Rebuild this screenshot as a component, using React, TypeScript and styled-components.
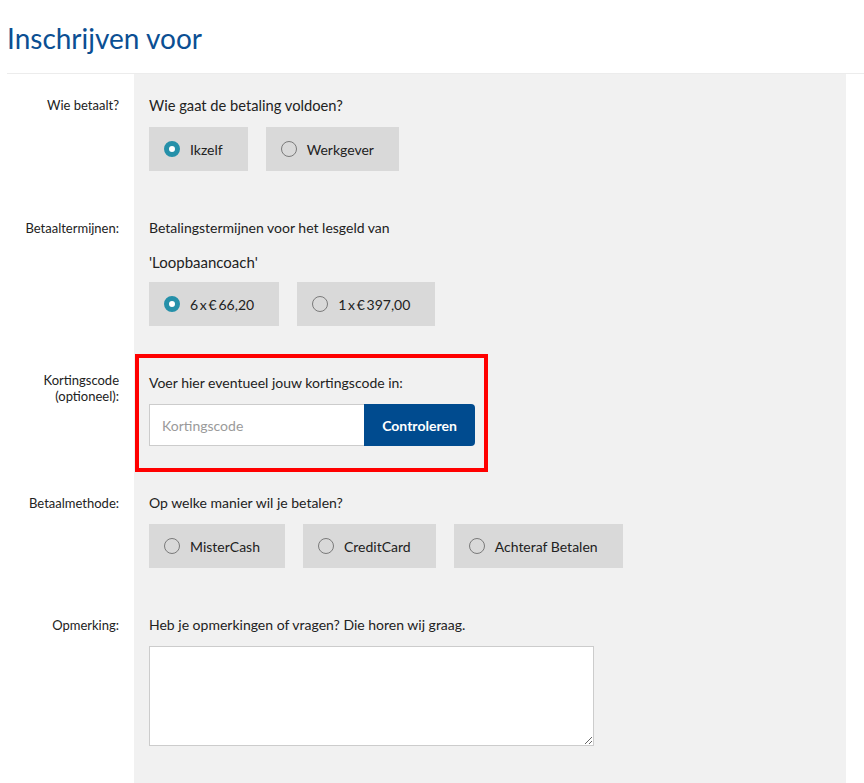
import React from 'react';
import styled, { createGlobalStyle } from 'styled-components';

const GlobalStyle = createGlobalStyle`
    body {
        margin: 0;
        background: #fff;
        font-family: Lato, "Open Sans", Arial, sans-serif;
        color: #222;
    }
`;

const Page = styled.div`
    width: 864px;
    padding-left: 7px;
    box-sizing: border-box;
`;

const Title = styled.h1`
    margin: 0 0 17px;
    padding-top: 20px;
    font-size: 28px;
    line-height: 36px;
    font-weight: 400;
    color: #0b4f93;
`;

const Form = styled.div`
    border-top: 1px solid #ececec;
`;

const Row = styled.div`
    display: grid;
    grid-template-columns: 127px 712px;
`;

const Label = styled.div<{ $top: number }>`
    padding: ${p => p.$top}px 15px 0 0;
    text-align: right;
    font-size: 13px;
    line-height: 20px;
    color: #222;
`;

const TwoLineLabel = styled(Label)`
    line-height: 16px;
`;

const Field = styled.div<{ $top: number; $bottom: number }>`
    background: #f1f1f1;
    padding: ${p => p.$top}px 15px ${p => p.$bottom}px;
`;

const BoxField = styled.div`
    background: #f1f1f1;
    padding: 4px 0 21px 1px;
`;

const Highlight = styled.div`
    width: 353px;
    box-sizing: border-box;
    border: 4px solid #ff0000;
    padding: 15px 9px 22px 10px;
`;

const Question = styled.p<{ $size?: number; $gap?: number }>`
    margin: 0 0 ${p => p.$gap ?? 12}px;
    font-size: ${p => p.$size ?? 14}px;
    line-height: 20px;
    color: #222;
`;

const Options = styled.div`
    display: flex;
    gap: 18px;
`;

const Option = styled.label`
    display: flex;
    align-items: center;
    gap: 10px;
    height: 44px;
    padding: 0 25px 0 15px;
    background: #d9d9d9;
    font-size: 14px;
    color: #222;
    cursor: pointer;
`;

const Radio = styled.span<{ $checked?: boolean }>`
    width: 16px;
    height: 16px;
    box-sizing: border-box;
    border-radius: 50%;
    flex-shrink: 0;
    border: ${p => (p.$checked ? '5px solid #2590a9' : '1px solid #7a7a7a')};
    background: ${p => (p.$checked ? '#fff' : 'transparent')};
`;

const CodeGroup = styled.div`
    display: flex;
    height: 42px;
`;

const CodeInput = styled.input`
    width: 215px;
    box-sizing: border-box;
    border: 1px solid #ccc;
    border-right: none;
    padding: 0 12px;
    font-family: inherit;
    font-size: 14px;
    color: #222;
    background: #fff;
    outline: none;

    &::placeholder {
        color: #9a9a9a;
    }
`;

const CheckButton = styled.button`
    width: 111px;
    border: none;
    border-radius: 0 4px 4px 0;
    background: #004b8f;
    color: #fff;
    font-family: inherit;
    font-size: 14px;
    font-weight: 700;
    cursor: pointer;
`;

const Remark = styled.textarea`
    display: block;
    width: 445px;
    height: 100px;
    box-sizing: border-box;
    border: 1px solid #ccc;
    background: #fff;
    font-family: inherit;
    font-size: 14px;
`;

type Choice = { text: string; checked?: boolean };

const RadioGroup = ({ items }: { items: Choice[] }): JSX.Element => (
    <Options>
        {items.map(item => (
            <Option key={item.text}>
                <Radio $checked={item.checked} />
                {item.text}
            </Option>
        ))}
    </Options>
);

const App = (): JSX.Element => (
    <Page>
        <GlobalStyle />
        <Title>Inschrijven voor</Title>
        <Form>
            <Row>
                <Label $top={21}>Wie betaalt?</Label>
                <Field $top={21} $bottom={24}>
                    <Question $size={14.7}>Wie gaat de betaling voldoen?</Question>
                    <RadioGroup items={[{ text: 'Ikzelf', checked: true }, { text: 'Werkgever' }]} />
                </Field>
            </Row>
            <Row>
                <Label $top={23}>Betaaltermijnen:</Label>
                <Field $top={23} $bottom={24}>
                    <Question $gap={14}>Betalingstermijnen voor het lesgeld van</Question>
                    <Question $size={15} $gap={10}>'Loopbaancoach'</Question>
                    <RadioGroup items={[{ text: '6\u2009x\u2009€\u200966,20', checked: true }, { text: '1\u2009x\u2009€\u2009397,00' }]} />
                </Field>
            </Row>
            <Row>
                <TwoLineLabel $top={22}>Kortingscode<br />(optioneel):</TwoLineLabel>
                <BoxField>
                    <Highlight>
                        <Question $gap={11}>Voer hier eventueel jouw kortingscode in:</Question>
                        <CodeGroup>
                            <CodeInput placeholder="Kortingscode" />
                            <CheckButton>Controleren</CheckButton>
                        </CodeGroup>
                    </Highlight>
                </BoxField>
            </Row>
            <Row>
                <Label $top={0}>Betaalmethode:</Label>
                <Field $top={0} $bottom={24}>
                    <Question $gap={11}>Op welke manier wil je betalen?</Question>
                    <RadioGroup items={[{ text: 'MisterCash' }, { text: 'CreditCard' }, { text: 'Achteraf Betalen' }]} />
                </Field>
            </Row>
            <Row>
                <Label $top={23}>Opmerking:</Label>
                <Field $top={23} $bottom={60}>
                    <Question $gap={11}>Heb je opmerkingen of vragen? Die horen wij graag.</Question>
                    <Remark />
                </Field>
            </Row>
        </Form>
    </Page>
);

export default App;
